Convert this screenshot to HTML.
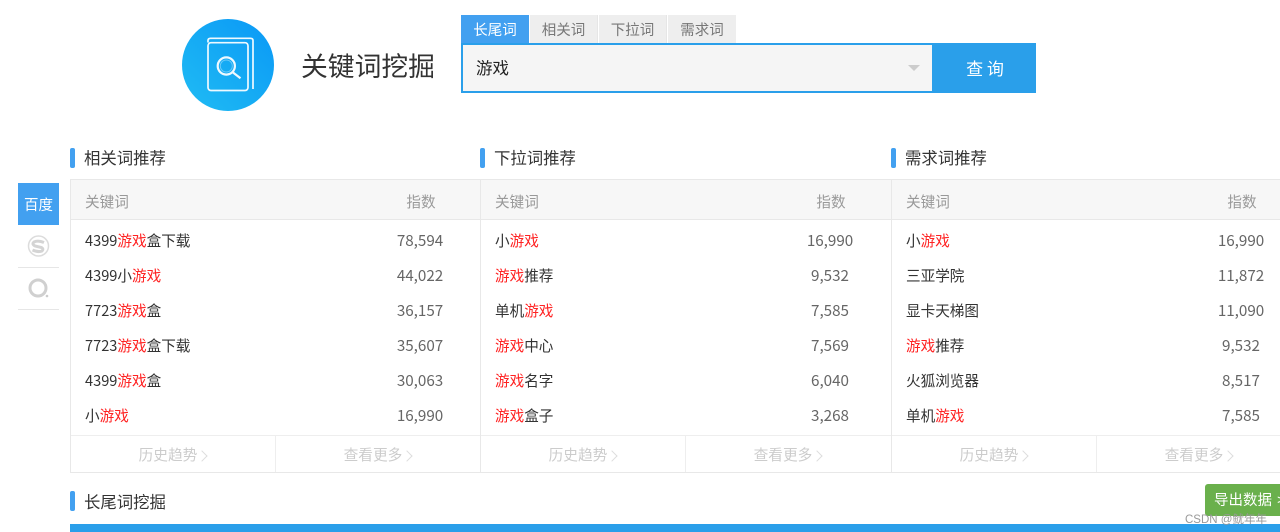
<!DOCTYPE html>
<html lang="zh">
<head>
<meta charset="utf-8">
<title>关键词挖掘</title>
<style>
html,body{margin:0;padding:0;background:#fff;}
body{width:1280px;height:532px;position:relative;overflow:hidden;font-family:"Noto Sans CJK SC","Liberation Sans",sans-serif;color:#333;font-size:14.600px;}
.a{position:absolute;white-space:nowrap;}
.tab{position:absolute;top:15px;height:28px;line-height:29px;width:68px;text-align:center;background:#eee;color:#777;font-size:14.500px;border-right:1px solid #e6e6e6;box-sizing:border-box;}
.bar{position:absolute;width:5px;height:20px;background:#42a0f0;border-radius:2px;}
.ttl{position:absolute;font-size:16.400px;line-height:22px;color:#333;white-space:nowrap;}
.tb{position:absolute;top:179px;height:294px;width:411px;box-sizing:border-box;border-left:1px solid #e8e8e8;border-bottom:1px solid #e8e8e8;}
.hd{position:absolute;left:0;right:0;top:0;height:41px;box-sizing:border-box;background:#f7f7f7;border-top:1px solid #e8e8e8;border-bottom:1px solid #e8e8e8;color:#999;line-height:43px;}
.hd .k{position:absolute;left:14px;}
.hd .n{position:absolute;left:290px;width:120px;text-align:center;}
.r{position:absolute;left:14px;height:35px;line-height:35px;white-space:nowrap;color:#333;}
.r i{font-style:normal;color:#f22;}
.v{position:absolute;left:289px;width:120px;height:35px;line-height:35px;text-align:center;color:#666;font-size:15.200px;}
.ft{position:absolute;left:0;right:0;top:256px;height:37px;border-top:1px solid #eee;color:#ccc;font-size:14.700px;line-height:38px;text-align:center;box-sizing:border-box;}
.ft span{position:absolute;top:0;width:205px;margin-left:-1px;}
.ft span:after{content:"";display:inline-block;width:7px;height:7px;border-top:1px solid #ddd;border-right:1px solid #ddd;transform:rotate(45deg);margin-left:1px;vertical-align:0;}
.ft .sep{position:absolute;left:204px;top:0;bottom:0;width:1px;background:#eee;}
</style>
</head>
<body>
<!-- logo -->
<div class="a" style="left:182px;top:19px;width:92px;height:92px;border-radius:50%;background:linear-gradient(45deg,#20bcf3,#0a98f6);"></div>
<svg class="a" style="left:182px;top:19px" width="93" height="93" viewBox="0 0 93 93" fill="none" stroke="#eef9ff" stroke-width="1.700">
<path d="M26 23.500V21.500Q26 19.300 28.500 19.300H68.500Q71 19.300 71 21.500V70"/>
<rect x="26" y="23.700" width="40" height="47.800" rx="3"/>
<circle cx="44.300" cy="47" r="8.600" stroke-width="2.200"/>
<circle cx="44.300" cy="47" r="6" stroke-width="1" stroke-opacity=".4"/>
<path d="M51 53.500L58.500 59.300" stroke-width="2.200"/>
</svg>
<div class="a" style="left:301px;top:44px;font-size:26.800px;line-height:42px;color:#333;">关键词挖掘</div>

<!-- search -->
<div class="tab" style="left:461px;background:#42a0f0;color:#fff;border:0;">长尾词</div>
<div class="tab" style="left:530px;">相关词</div>
<div class="tab" style="left:599px;">下拉词</div>
<div class="tab" style="left:668px;border:0;">需求词</div>
<div class="a" style="left:461px;top:43px;width:575px;height:50px;box-sizing:border-box;border:2px solid #2a9fea;background:#f5f5f5;"></div>
<div class="a" style="left:476px;top:56px;font-size:16.500px;line-height:22px;color:#222;">游戏</div>
<div class="a" style="left:908px;top:65px;width:0;height:0;border-left:6px solid transparent;border-right:6px solid transparent;border-top:6px solid #ccc;"></div>
<div class="a" style="left:932px;top:43px;width:106px;height:50px;background:#2a9fea;color:#fff;font-size:17px;line-height:49px;text-align:center;"><span style="display:block;width:106px;">查 询</span></div>
<div class="a" style="left:1036px;top:43px;width:3px;height:50px;background:#fff;"></div>

<!-- side -->
<div class="a" style="left:18px;top:183px;width:41px;height:42px;background:#42a0f0;color:#fff;font-size:14.500px;line-height:44px;text-align:center;">百度</div>
<svg class="a" style="left:18px;top:225px" width="41" height="85" viewBox="0 0 41 85" fill="none">
<circle cx="20.500" cy="21" r="10" stroke="#dcdcdc" stroke-width="1.500"/>
<path d="M26 17.500Q20 15 16 17Q13.500 19 17 21L23.500 22.500Q26 24 24 26Q20 27.500 14.500 25" stroke="#d4d4d4" stroke-width="3"/>
<rect x="0" y="42" width="41" height="1" fill="#e6e6e6"/>
<circle cx="20" cy="63" r="8" stroke="#d0d0d0" stroke-width="3"/>
<circle cx="29" cy="71" r="1.300" fill="#ccc"/>
<rect x="0" y="84" width="41" height="1" fill="#e6e6e6"/>
</svg>

<!-- column 1 -->
<div class="bar" style="left:70px;top:148px;"></div>
<div class="ttl" style="left:84px;top:146px;">相关词推荐</div>
<div class="tb" style="left:70px;">
<div class="hd"><span class="k">关键词</span><span class="n">指数</span></div>
<div class="r" style="top:44px;">4399<i>游戏</i>盒下载</div><div class="v" style="top:44px;">78,594</div>
<div class="r" style="top:79px;">4399小<i>游戏</i></div><div class="v" style="top:79px;">44,022</div>
<div class="r" style="top:114px;">7723<i>游戏</i>盒</div><div class="v" style="top:114px;">36,157</div>
<div class="r" style="top:149px;">7723<i>游戏</i>盒下载</div><div class="v" style="top:149px;">35,607</div>
<div class="r" style="top:184px;">4399<i>游戏</i>盒</div><div class="v" style="top:184px;">30,063</div>
<div class="r" style="top:219px;">小<i>游戏</i></div><div class="v" style="top:219px;">16,990</div>
<div class="ft"><span style="left:0;">历史趋势</span><div class="sep"></div><span style="left:205px;">查看更多</span></div>
</div>

<!-- column 2 -->
<div class="bar" style="left:480px;top:148px;"></div>
<div class="ttl" style="left:494px;top:146px;">下拉词推荐</div>
<div class="tb" style="left:480px;">
<div class="hd"><span class="k">关键词</span><span class="n">指数</span></div>
<div class="r" style="top:44px;">小<i>游戏</i></div><div class="v" style="top:44px;">16,990</div>
<div class="r" style="top:79px;"><i>游戏</i>推荐</div><div class="v" style="top:79px;">9,532</div>
<div class="r" style="top:114px;">单机<i>游戏</i></div><div class="v" style="top:114px;">7,585</div>
<div class="r" style="top:149px;"><i>游戏</i>中心</div><div class="v" style="top:149px;">7,569</div>
<div class="r" style="top:184px;"><i>游戏</i>名字</div><div class="v" style="top:184px;">6,040</div>
<div class="r" style="top:219px;"><i>游戏</i>盒子</div><div class="v" style="top:219px;">3,268</div>
<div class="ft"><span style="left:0;">历史趋势</span><div class="sep"></div><span style="left:205px;">查看更多</span></div>
</div>

<!-- column 3 -->
<div class="bar" style="left:891px;top:148px;"></div>
<div class="ttl" style="left:905px;top:146px;">需求词推荐</div>
<div class="tb" style="left:891px;">
<div class="hd"><span class="k">关键词</span><span class="n">指数</span></div>
<div class="r" style="top:44px;">小<i>游戏</i></div><div class="v" style="top:44px;">16,990</div>
<div class="r" style="top:79px;">三亚学院</div><div class="v" style="top:79px;">11,872</div>
<div class="r" style="top:114px;">显卡天梯图</div><div class="v" style="top:114px;">11,090</div>
<div class="r" style="top:149px;"><i>游戏</i>推荐</div><div class="v" style="top:149px;">9,532</div>
<div class="r" style="top:184px;">火狐浏览器</div><div class="v" style="top:184px;">8,517</div>
<div class="r" style="top:219px;">单机<i>游戏</i></div><div class="v" style="top:219px;">7,585</div>
<div class="ft"><span style="left:0;">历史趋势</span><div class="sep"></div><span style="left:205px;">查看更多</span></div>
</div>

<!-- bottom -->
<div class="bar" style="left:70px;top:491px;"></div>
<div class="ttl" style="left:84px;top:490px;">长尾词挖掘</div>
<div class="a" style="left:1205px;top:484px;width:90px;height:32px;background:#6ab04c;border-radius:3px;color:#fff;font-size:14.500px;line-height:31px;padding-left:9px;box-sizing:border-box;word-spacing:2px;">导出数据 &gt;</div>
<div class="a" style="left:70px;top:524px;width:1210px;height:8px;background:#2a9fea;"></div>
<div class="a" style="left:1185px;top:512px;font-size:11.500px;line-height:16px;color:#999;font-family:'Liberation Sans','Noto Sans CJK SC',sans-serif;">CSDN @鱿年年</div>
</body>
</html>
